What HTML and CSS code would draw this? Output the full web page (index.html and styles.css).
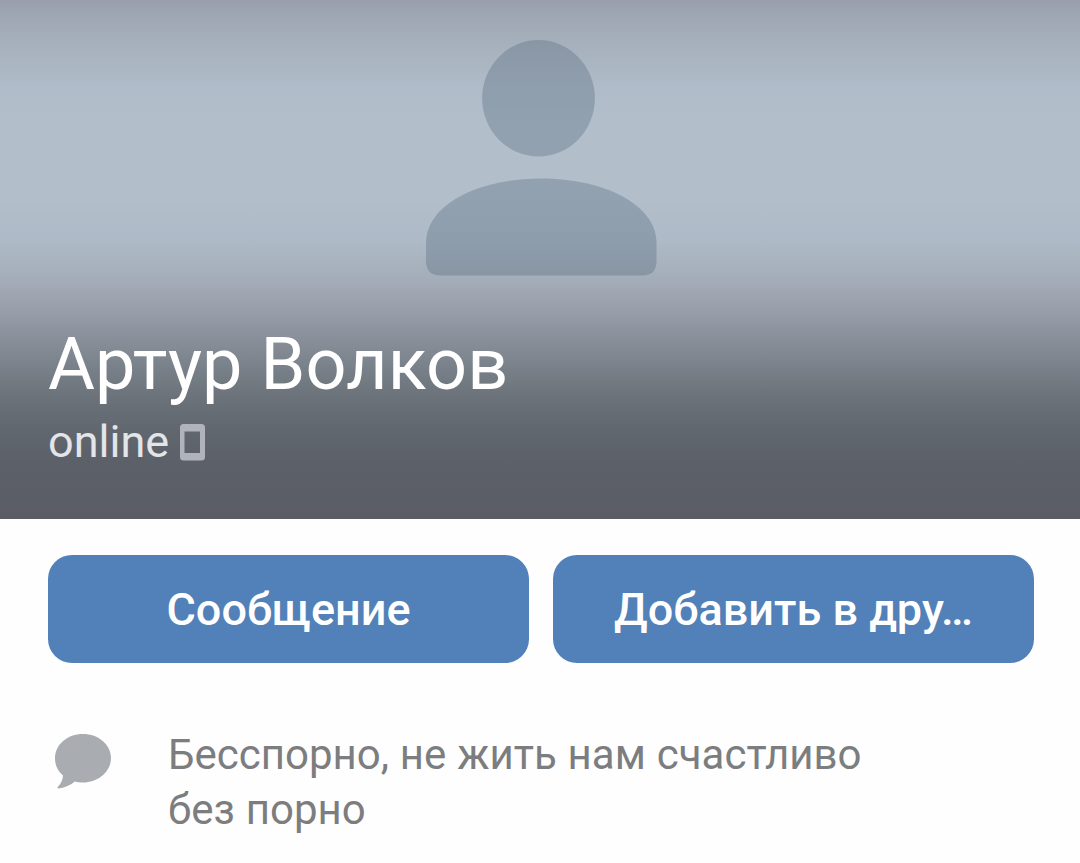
FILE: index.html
```html
<!DOCTYPE html>
<html lang="ru">
<head>
  <meta charset="UTF-8">
  <title>Артур Волков</title>
  <link rel="stylesheet" href="styles.css">
</head>
<body>
  <div class="profile">
    <div class="cover">
      <svg class="avatar" viewBox="0 0 232 236">
        <ellipse cx="113.500" cy="58.300" rx="56.400" ry="58.200"/>
        <path d="M1 203C1 165 52 138.500 116 138.500S231.500 165 231.500 203V221Q231.500 235.500 217 235.500H15.500Q1 235.500 1 221Z"/>
      </svg>
      <h1 class="name">Артур Волков</h1>
      <div class="status">
        <span>online</span>
        <svg class="phone" viewBox="0 0 25 37">
          <path fill-rule="evenodd" d="M3.500 0H21.500Q25 0 25 3.500V33Q25 36.500 21.500 36.500H3.500Q0 36.500 0 33V3.500Q0 0 3.500 0ZM4.500 7.500V29H20V7.500Z"/>
        </svg>
      </div>
    </div>

    <div class="actions">
      <button class="btn">Сообщение</button>
      <button class="btn">Добавить в дру…</button>
    </div>

    <div class="about">
      <svg class="bubble" viewBox="0 0 56 56">
        <path d="M28 0C43.500 0 56 10.500 56 24S43.500 48.500 28 48.500C25 48.500 22.500 48.200 20 47.500C15 51.500 9 54 3.500 54.500C2.300 54.600 2.200 53.500 3 52.800C6 49.800 7.800 45.500 8 41.500C3 37.500 0 31.500 0 24.500C0 10.500 12.500 0 28 0Z"/>
      </svg>
      <p class="about-text">Бесспорно, не жить нам счастливо<br>без порно</p>
    </div>
  </div>
</body>
</html>
```

FILE: styles.css
```css
* {
  box-sizing: border-box;
}

body {
  margin: 0;
  font-family: Roboto, "Liberation Sans", sans-serif;
  background-color: #fefefe;
}

.profile {
  height: 863px;
  overflow: hidden;
}

.cover {
  height: 519px;
  padding: 40px 48px 0;
  background: linear-gradient(
    #999fab 0,
    #9ea7b3 16px,
    #a8b2bf 50px,
    #afbbc8 85px,
    #b2bfcb 120px,
    #b2bfcb 200px,
    #aebac7 240px,
    #a5afbb 275px,
    #989eaa 311px,
    #888f99 340px,
    #777f88 370px,
    #6a7178 400px,
    #61676f 430px,
    #5c6069 460px,
    #5a5d66 519px
  );
}

.avatar {
  display: block;
  width: 232px;
  height: 236px;
  margin-left: 377px;
  fill: #4f6475;
  fill-opacity: 0.33;
}

.name {
  margin: 47px 0 0;
  color: #fff;
  font-size: 72px;
  font-weight: 400;
  line-height: 84px;
  letter-spacing: 0.1px;
}

.status {
  display: flex;
  align-items: center;
  gap: 11px;
  margin-top: 9px;
  color: #e3e5e9;
  font-size: 45px;
  line-height: 52px;
}

.phone {
  width: 25px;
  height: 37px;
  fill: #b0b3bb;
}

.actions {
  display: flex;
  gap: 24px;
  padding: 36px 46px 0 48px;
}

.btn {
  flex: 1;
  height: 108px;
  padding: 0;
  border: none;
  border-radius: 24px;
  background-color: #5181b8;
  color: #fff;
  font-family: inherit;
  font-size: 45px;
  font-weight: 500;
}

.about {
  display: flex;
  gap: 57px;
  padding: 64px 48px 0 55px;
}

.bubble {
  flex: none;
  width: 56px;
  height: 56px;
  margin-top: 7px;
  fill: #a9adb2;
}

.about-text {
  margin: 0;
  color: #7c7d7f;
  font-size: 42px;
  line-height: 55px;
  word-spacing: 0.5px;
}
```
